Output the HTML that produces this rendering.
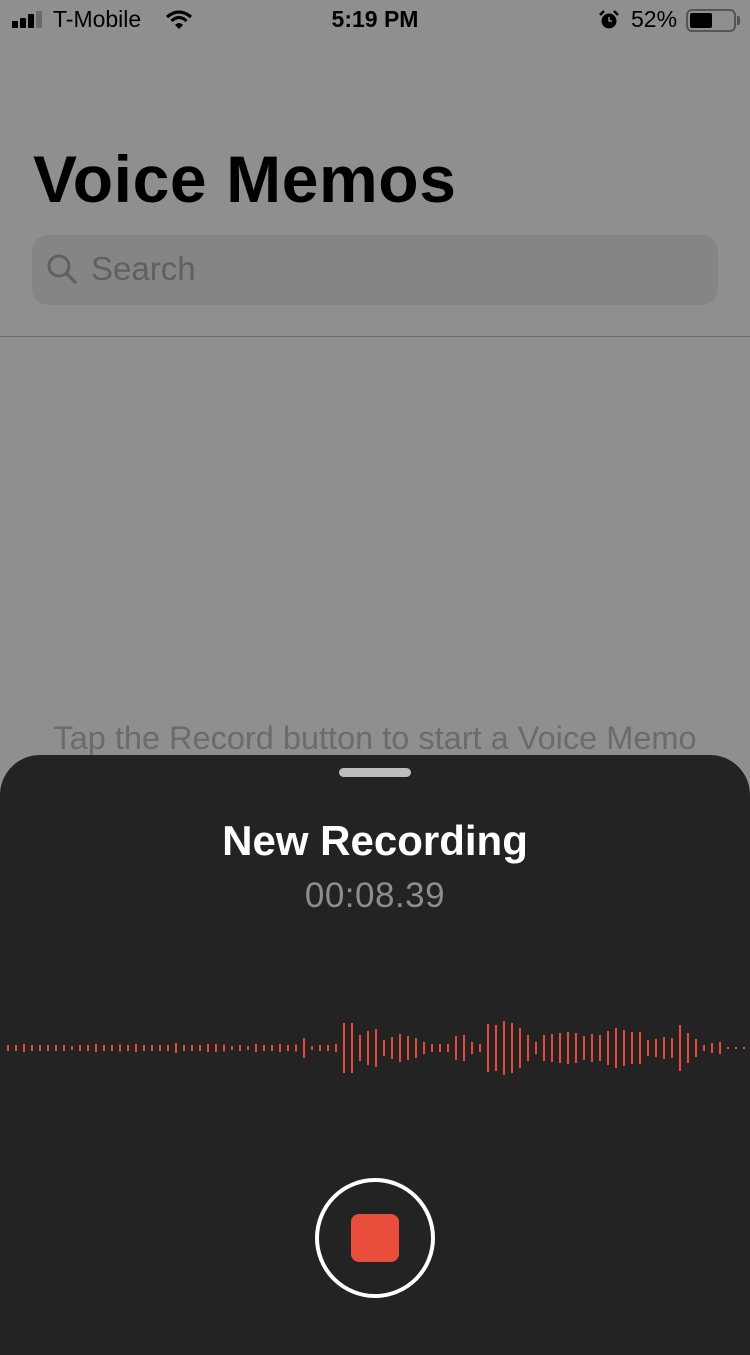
<!DOCTYPE html>
<html><head><meta charset="utf-8"><style>
*{margin:0;padding:0;box-sizing:border-box}
body{width:750px;height:1334px;overflow:hidden;background:#8f8f8f;position:relative;font-family:"Liberation Sans",sans-serif;}
.abs{position:absolute}
</style></head><body>
<div class="abs" style="left:12px;top:11px;width:36px;height:18px">
 <div class="abs" style="left:0;top:10px;width:6px;height:7px;background:#000;border-radius:1px"></div>
 <div class="abs" style="left:8px;top:7px;width:6px;height:10px;background:#000;border-radius:1px"></div>
 <div class="abs" style="left:16px;top:3px;width:6px;height:14px;background:#000;border-radius:1px"></div>
 <div class="abs" style="left:24px;top:0;width:6px;height:17px;background:#6a6a6a;border-radius:1px"></div>
</div>
<div class="abs" style="left:53px;top:6px;font-size:23px;color:#000">T-Mobile</div>
<svg class="abs" style="left:165px;top:10px" width="28" height="20" viewBox="0 0 28 20"><path d="M2 7 Q14 -3 26 7" stroke="#000" stroke-width="3.2" fill="none"/><path d="M6.5 11 Q14 4 21.5 11" stroke="#000" stroke-width="3.2" fill="none"/><path d="M10 15 L14 19 L18 15 Q14 11 10 15Z" fill="#000"/></svg>
<div class="abs" style="left:0;width:750px;text-align:center;top:6px;font-size:23px;font-weight:bold;color:#000">5:19 PM</div>
<svg class="abs" style="left:598px;top:10px" width="22" height="20" viewBox="0 0 22 20"><circle cx="11" cy="11" r="7.5" fill="#000"/><path d="M2 5 L6 1 M20 5 L16 1" stroke="#000" stroke-width="2.5"/><path d="M11 7 V11 H14" stroke="#8f8f8f" stroke-width="1.5" fill="none"/></svg>
<div class="abs" style="left:631px;top:6px;font-size:23px;color:#000">52%</div>
<div class="abs" style="left:686px;top:9px;width:50px;height:23px;border:2px solid #555;border-radius:6px"></div>
<div class="abs" style="left:690px;top:13px;width:22px;height:15px;background:#000;border-radius:2px"></div>
<div class="abs" style="left:737px;top:16px;width:3px;height:9px;background:#555;border-radius:0 2px 2px 0"></div>

<div class="abs" style="left:33px;top:141px;font-size:66px;font-weight:bold;color:#000;letter-spacing:0.6px">Voice Memos</div>
<div class="abs" style="left:32px;top:235px;width:686px;height:70px;background:#858585;border-radius:16px"></div>
<svg class="abs" style="left:46px;top:253px" width="32" height="32" viewBox="0 0 32 32"><circle cx="13" cy="13" r="10" stroke="#606060" stroke-width="3" fill="none"/><path d="M20.5 20.5 L29 29" stroke="#606060" stroke-width="3.2" stroke-linecap="round"/></svg>
<div class="abs" style="left:91px;top:250px;font-size:33px;color:#606060">Search</div>
<div class="abs" style="left:0;top:336px;width:750px;height:1px;background:#6d6d6d"></div>
<div class="abs" style="left:0;width:750px;text-align:center;top:720px;font-size:32.5px;color:#6b6b6b">Tap the Record button to start a Voice Memo</div>

<div class="abs" style="left:0;top:755px;width:750px;height:600px;background:#232323;border-radius:40px 40px 0 0"></div>
<div class="abs" style="left:339px;top:768px;width:72px;height:9px;background:#bdbdbd;border-radius:5px"></div>
<div class="abs" style="left:0;width:750px;text-align:center;top:817px;font-size:42px;font-weight:bold;color:#fff">New Recording</div>
<div class="abs" style="left:0;width:750px;text-align:center;top:876px;font-size:35px;color:#8d8d8d;letter-spacing:0.5px">00:08.39</div>
<svg class="abs" style="left:0;top:1000px" width="750" height="100" id="wv"></svg>
<div class="abs" style="left:315px;top:1178px;width:120px;height:120px;border:4px solid #fff;border-radius:50%"></div>
<div class="abs" style="left:351px;top:1214px;width:48px;height:48px;background:#e94e3c;border-radius:8px"></div>
<script>
var L=[18,18,24,18,18,18,18,18,12,18,18,24,18,18,21,18,24,18,18,18,18,30,18,18,18,24,24,21,12,18,12,24,18,18,24,18,21,60,12,18,18,24,150,150,78,102];
var R=[114,48,66,84,72,60,36,24,24,24,72,78,36,24,144,138,162,150,120,78,36,78,84,90,96,90,72,84,78,102,120,108,96,96,48,54,66,60,138,90,54,18,30,36,6,6,6];
var s='';
function add(x,h){h=h/3;s+='<rect x="'+x+'" y="'+(48-h/2)+'" width="2" height="'+h+'" fill="#e84a3a"/>';}
L.forEach(function(h,i){add(7+i*8,h)});
R.forEach(function(h,i){add(375+i*8,h)});
document.getElementById('wv').innerHTML=s;
</script>
</body></html>
